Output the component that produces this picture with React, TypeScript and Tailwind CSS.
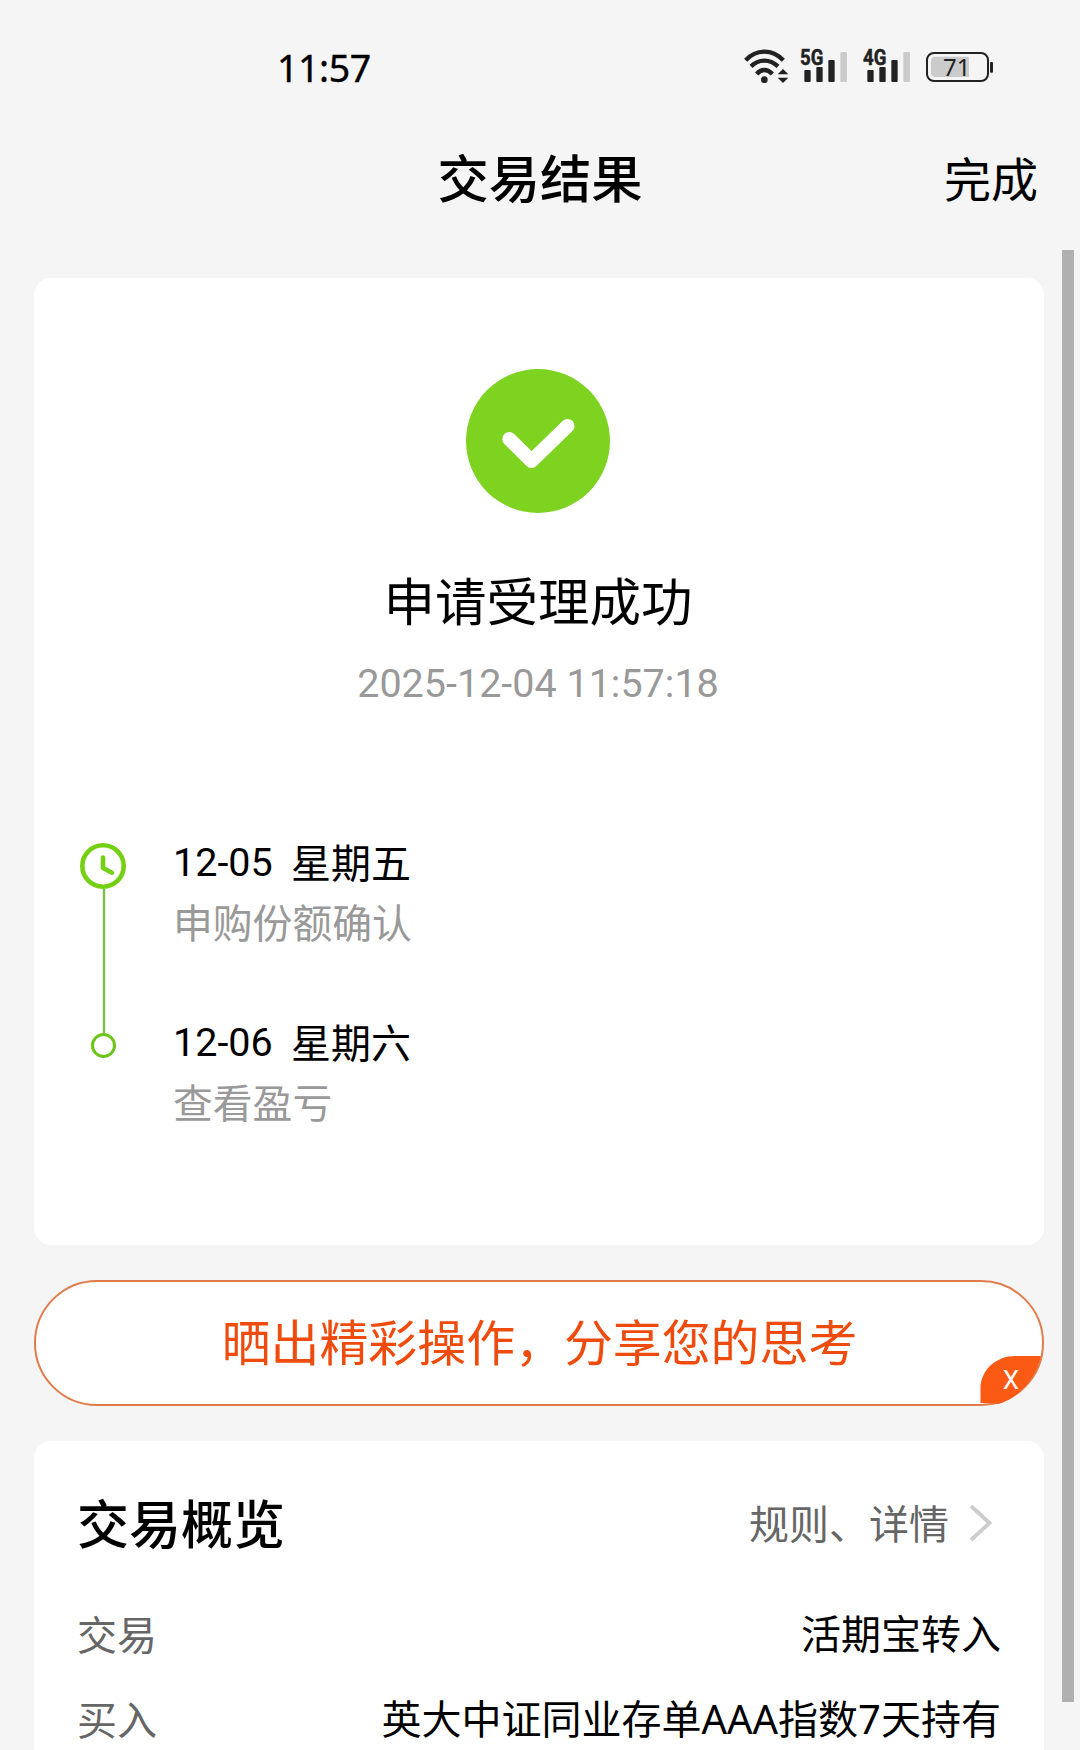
import type { ReactNode } from "react";

const cjk = "font-['Noto_Sans_CJK_SC',sans-serif]";

function WifiIcon() {
  return (
    <svg className="ml-[1px] h-[36px] w-[46px] shrink-0" viewBox="66 54 138 108" fill="none">
      <g stroke="#222" strokeWidth="13">
        <path d="M74 91Q98 65 130 65T187 91" />
        <path d="M90 109Q108 92 130 92T171 109" />
        <path d="M107 132Q117 120 130 120T154 132" />
      </g>
      <circle cx="130" cy="149" r="10" fill="#222" />
      <path d="M186 117L202 133H170Z" fill="#222" />
      <path d="M186 159L202 143H170Z" fill="#222" />
    </svg>
  );
}

function SignalIcon({ label }: { label: string }) {
  return (
    <svg className="-mt-[6px] h-[42px] w-[49px] shrink-0" viewBox="240 36 147 126">
      <text x="240" y="105" fontSize="65" fontWeight="700" fill="#222" stroke="#222" strokeWidth="1.5" textLength="70" lengthAdjust="spacingAndGlyphs" className="font-[Roboto,sans-serif]">
        {label}
      </text>
      <rect x="253" y="120" width="19" height="36" rx="3" fill="#222" />
      <rect x="289" y="111" width="19" height="45" rx="3" fill="#222" />
      <rect x="325" y="90" width="19" height="66" rx="3" fill="#222" />
      <rect x="361" y="66" width="20" height="90" rx="4" fill="#cbcbcb" />
    </svg>
  );
}

function BatteryIcon() {
  return (
    <svg className="h-[36px] w-[70px] shrink-0" viewBox="612 54 210 108">
      <rect x="621" y="69" width="183" height="84" rx="21" fill="none" stroke="#222" strokeWidth="6" />
      <path d="M645 80H747V141H645Q633 141 633 129V92Q633 80 645 80Z" fill="#cbcbcb" />
      <rect x="810" y="96" width="9" height="32" rx="3" fill="#222" />
      <text x="669" y="138" fontSize="70" fill="#222" textLength="82" lengthAdjust="spacingAndGlyphs" className="font-['Noto_Sans',sans-serif]">
        71
      </text>
    </svg>
  );
}

function Step({ date, day, note }: { date: string; day: string; note: string }) {
  return (
    <div className="flex h-[180px] flex-col">
      <div className="flex h-[60px] items-start text-black">
        <span className="w-[118px] pt-[2px] font-[Roboto,sans-serif] text-[39.5px] leading-[60px]">{date}</span>
        <span className="text-[40px] leading-[60px]">{day}</span>
      </div>
      <div className="h-[60px] text-[39.8px] leading-[60px] text-[#999]">{note}</div>
    </div>
  );
}

function Row({ label, children }: { label: string; children: ReactNode }) {
  return (
    <div className="flex h-[85px] items-center justify-between text-[40px] leading-[60px]">
      <span className="text-[#666]">{label}</span>
      <span className="pt-[3px] font-['Noto_Sans','Noto_Sans_CJK_SC',sans-serif] whitespace-nowrap text-black">{children}</span>
    </div>
  );
}

export default function App() {
  return (
    <div className={`${cjk} relative flex h-[1750px] w-[1080px] flex-col overflow-hidden bg-[#f5f5f5] text-black`}>
      <header className="flex h-[278px] shrink-0 flex-col">
        <div className="flex h-[120px] pt-[48px]">
          <div className="ml-[277px] h-[40px] w-[465px] font-['Noto_Sans',sans-serif] text-[37.5px] leading-[40px] tracking-[-0.4px] [-webkit-text-stroke:0.4px_black]">11:57</div>
          <WifiIcon />
          <div className="ml-[11px] flex gap-[14px]">
            <SignalIcon label="5G" />
            <SignalIcon label="4G" />
          </div>
          <div className="ml-[12px]">
            <BatteryIcon />
          </div>
        </div>
        <div className="grid h-[112px] grid-cols-[300px_480px_300px] items-center">
          <span />
          <h1 className="text-center text-[51.3px] leading-[70px] font-medium">交易结果</h1>
          <button className="pt-[2px] pr-[42px] text-right text-[47px] leading-[70px]">完成</button>
        </div>
      </header>

      <main className="ml-[34px] flex w-[1010px] flex-col">
        <section className="flex h-[967px] shrink-0 flex-col rounded-[17px] bg-white pt-[91px]">
          <div className="flex flex-col items-center pr-[2px]">
            <svg className="h-[144px] w-[144px]" viewBox="0 0 144 144" fill="none">
              <circle cx="72" cy="72" r="72" fill="#7ed321" />
              <path d="M43.3 70L65.5 92L101.5 57" stroke="white" strokeWidth="14" strokeLinecap="round" strokeLinejoin="round" />
            </svg>
            <h2 className="mt-[51px] h-[70px] text-[51.5px] leading-[70px]">申请受理成功</h2>
            <p className="mt-[20px] h-[60px] font-[Roboto,sans-serif] text-[39.5px] leading-[60px] text-[#999]">2025-12-04 11:57:18</p>
          </div>
          <div className="mt-[117px] flex pl-[46px]">
            <div className="mt-[12px] flex w-[93px] flex-col">
              <svg className="h-[216px] w-[48px]" viewBox="0 0 48 216" fill="none" strokeLinecap="round" strokeLinejoin="round">
                <path d="M24 46V190" stroke="#7dbd43" strokeWidth="2.4" strokeLinecap="butt" />
                <circle cx="23" cy="23" r="20.7" stroke="#75d014" strokeWidth="4.6" />
                <path d="M23 14.5V25L32 29.7" stroke="#75d014" strokeWidth="4.6" />
                <circle cx="23.5" cy="202.5" r="11" stroke="#6ec51a" strokeWidth="3" />
              </svg>
            </div>
            <div>
              <Step date="12-05" day="星期五" note="申购份额确认" />
              <Step date="12-06" day="星期六" note="查看盈亏" />
            </div>
          </div>
        </section>

        <button className="relative mt-[35px] flex h-[126px] shrink-0 items-center justify-center rounded-full border-2 border-[#e07c4c] bg-white text-[48.9px] leading-[70px] whitespace-nowrap text-[#ee4b0c]">
          <span className="mb-[7px] ml-[1px]">晒出精彩操作，分享您的思考</span>
          <svg className="absolute top-[73px] right-[-1px] h-[51px] w-[78px]" viewBox="0 0 78 51">
            <path d="M15.5 48V34C15.5 14 32 1 50 1H76C72 20 57 42 33 49Q29 48 15.5 48Z" fill="#fa5a14" />
            <text x="46" y="34" textAnchor="middle" fontSize="26" fill="white" className="font-[Roboto,sans-serif]">X</text>
          </svg>
        </button>

        <section className="mt-[35px] h-[360px] shrink-0 rounded-[17px] bg-white pt-[46px] pr-[43px] pl-[43px]">
          <div className="flex h-[70px] items-center justify-between">
            <h3 className="text-[52px] leading-[70px] font-medium">交易概览</h3>
            <div className="flex items-center pr-[8px] text-[40px] leading-[60px] text-[#666]">
              <span>规则、详情</span>
              <svg className="mt-[2px] ml-[20px] h-[38px] w-[24px]" viewBox="0 0 24 38" fill="none">
                <path d="M2 2L20.5 19L2 36" stroke="#ccc" strokeWidth="3.8" />
              </svg>
            </div>
          </div>
          <div className="mt-[33px]">
            <Row label="交易">活期宝转入</Row>
            <Row label="买入">英大中证同业存单AAA指数7天持有</Row>
          </div>
        </section>
      </main>

      <div className="absolute top-[250px] left-[1062px] h-[1452px] w-[12px] bg-[#b0b0b0]" />
    </div>
  );
}
